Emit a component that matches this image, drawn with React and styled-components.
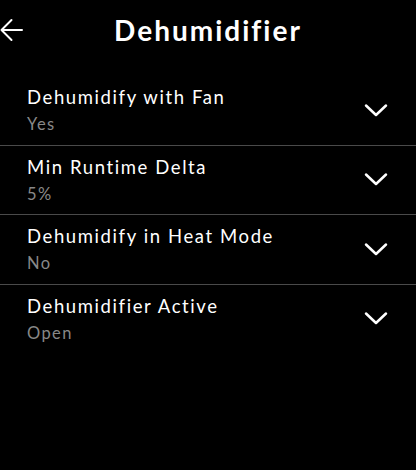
import React from "react";
import styled, { createGlobalStyle } from "styled-components";

const Global = createGlobalStyle`
  body {
    margin: 0;
    background: #000;
    font-family: Lato, "Noto Sans", sans-serif;
    color: #fff;
  }
`;

const Screen = styled.div`
  width: 416px;
  height: 470px;
  background: #000;
  overflow: hidden;
`;

const Header = styled.header`
  position: relative;
  height: 58px;
  display: flex;
  align-items: center;
  justify-content: center;
`;

const Back = styled.button`
  position: absolute;
  left: 0;
  top: 18px;
  padding: 0;
  border: none;
  background: none;
  cursor: pointer;
  display: flex;
`;

const Title = styled.h1`
  margin: 2px 0 0 0;
  font-size: 28px;
  font-weight: 700;
  letter-spacing: 2px;
`;

const List = styled.div`
  margin-top: 18px;
`;

const Row = styled.div`
  display: flex;
  align-items: center;
  justify-content: space-between;
  padding: 9px 28px 9.5px 27px;
  border-bottom: 1px solid ${(p) => (p.$last ? "transparent" : "#4a4a4a")};
`;

const Texts = styled.div`
  display: flex;
  flex-direction: column;
  gap: 4px;
`;

const Label = styled.div`
  font-size: 18.5px;
  line-height: 24px;
  letter-spacing: 1.6px;
`;

const Value = styled.div`
  font-size: 16.5px;
  line-height: 22px;
  letter-spacing: 1.4px;
  color: #888;
`;

const Chevron = () => (
  <svg width="24" height="15" viewBox="0 0 24 15">
    <path d="M2 2.5 L12 12 L22 2.5" fill="none" stroke="#fff" strokeWidth="2.5" strokeLinecap="round" strokeLinejoin="round" />
  </svg>
);

const rows = [
  { label: "Dehumidify with Fan", value: "Yes" },
  { label: "Min Runtime Delta", value: "5%" },
  { label: "Dehumidify in Heat Mode", value: "No" },
  { label: "Dehumidifier Active", value: "Open" },
];

export default function App() {
  return (
    <Screen>
      <Global />
      <Header>
        <Back aria-label="Back">
          <svg width="24" height="24" viewBox="0 0 24 24">
            <path d="M22 12 H1.5 M11.5 2 L1.5 12 L11.5 22" fill="none" stroke="#fff" strokeWidth="2" strokeLinecap="round" strokeLinejoin="round" />
          </svg>
        </Back>
        <Title>Dehumidifier</Title>
      </Header>
      <List>
        {rows.map((r, i) => (
          <Row key={r.label} $last={i === rows.length - 1}>
            <Texts>
              <Label>{r.label}</Label>
              <Value>{r.value}</Value>
            </Texts>
            <Chevron />
          </Row>
        ))}
      </List>
    </Screen>
  );
}
